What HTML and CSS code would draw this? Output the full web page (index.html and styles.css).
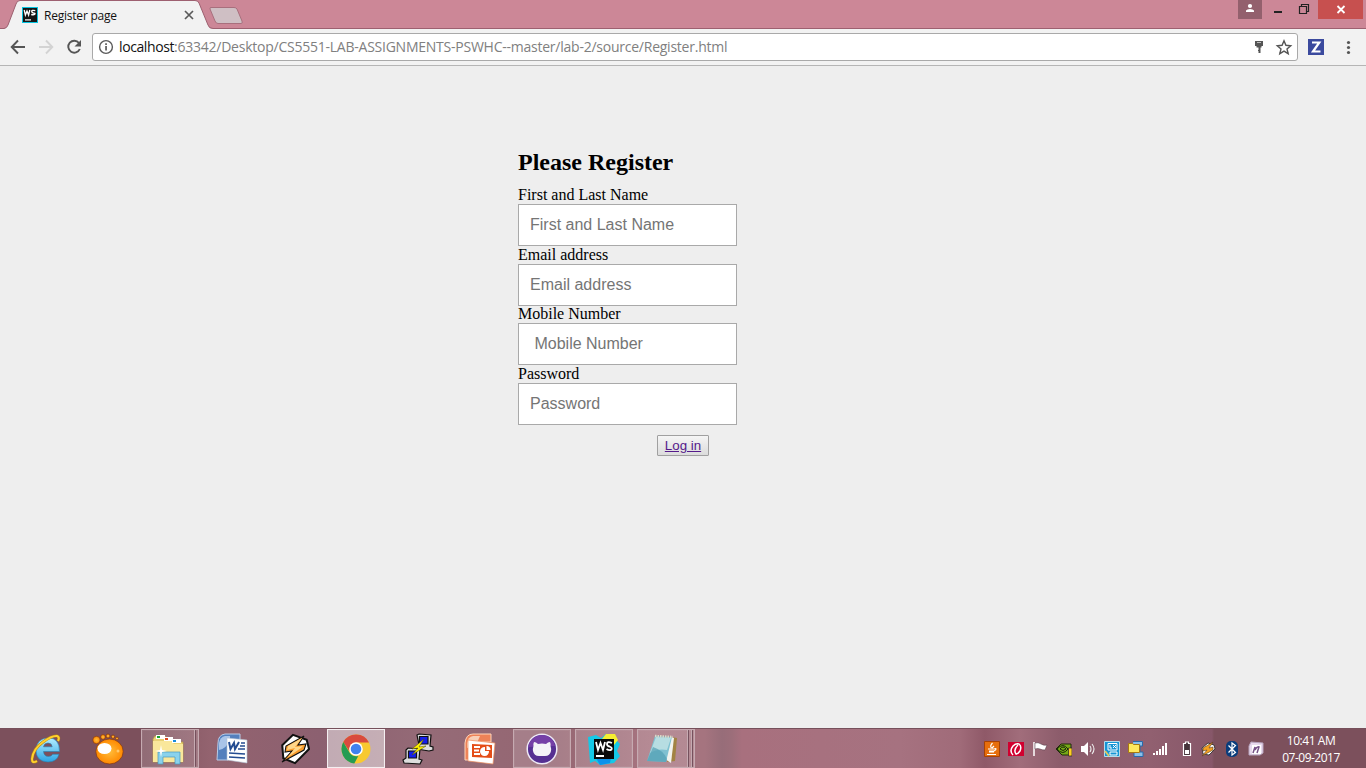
FILE: index.html
```html
<!DOCTYPE html>
<html lang="en">
<head>
<meta charset="utf-8">
<title>Register page</title>
<link rel="stylesheet" href="styles.css">
</head>
<body>
<div class="screen">
  <header class="tabstrip">
    <svg class="tab-shapes" width="250" height="29" viewBox="0 0 250 29">
      <path d="M0 28.500H5Q7 28 8 25L16 4Q17 .5 20 .5H195Q198 .5 199 3L208 25Q209 28.500 212 28.500H250V29H0Z" fill="#f2f2f2"/>
      <path d="M0 28.500H4Q7 28 8 25L16 4Q17 .5 20 .5H195Q198 .5 199 3L208 25Q209 28.500 213 28.500H250" fill="none" stroke="#9d6070"/>
      <path d="M211 7.500H234Q236 7.500 237 9L242 21Q243 23.500 241 23.500H218Q216 23.500 215 21L210 9Q209.500 7.500 211 7.500Z" fill="#cfbfc4" stroke="#a86f7d"/>
    </svg>
    <div class="tab">
      <svg width="16" height="16" viewBox="0 0 16 16"><path fill="#07c3df" d="M0 0h16v16H0z"/><path fill="#151515" d="M1 1h14v14H1z"/><path d="M2.200 3l1.200 5L5 4l1.600 4L7.800 3M13.300 3.600Q9.500 2.800 9.700 4.300T13 6.500Q13 8.300 9.200 7.500" fill="none" stroke="#fff" stroke-width="1.300"/><path fill="#fff" d="M3 12.300h6v1.200H3z"/></svg>
      <span class="tab-title">Register page</span>
      <svg class="tab-close" width="10" height="10" viewBox="0 0 10 10"><path d="M1 1l8 8M9 1L1 9" stroke="#5a5a5a" stroke-width="1.700"/></svg>
    </div>
    <div class="winbtns">
      <span class="user"><svg width="24" height="19" viewBox="0 0 24 19"><circle cx="12" cy="6" r="2.100" fill="#fff"/><path d="M8 12V10.500Q9 9 12 9t4 1.500V12z" fill="#fff"/></svg></span>
      <svg width="56" height="19" viewBox="0 0 56 19"><path d="M12 11h8v2h-8z" fill="#222"/><path d="M37.500 6.500h7v7h-7zM39.500 6V4.500h7v7H45" fill="none" stroke="#222" stroke-width="1.200"/></svg>
      <span class="winclose"><svg width="45" height="19" viewBox="0 0 45 19"><path d="M19.500 6l7 7m0-7l-7 7" stroke="#fff" stroke-width="1.800"/></svg></span>
    </div>
  </header>

  <nav class="toolbar">
    <svg width="92" height="36" viewBox="0 0 92 36" fill="none" stroke-width="1.900">
      <path d="M25 18H12M18 11.500L11.700 18l6.300 6.500" stroke="#555"/>
      <path d="M39 18h13M46 11.500l6.300 6.500-6.300 6.500" stroke="#d3d3d3"/>
      <path d="M79 14a6 6 0 1 0 .8 6" stroke="#555"/><path d="M81 11v6.500h-6.500z" fill="#555"/>
    </svg>
    <div class="omnibox">
      <svg class="info" width="16" height="16" viewBox="0 0 16 16"><circle cx="8" cy="8" r="6.400" fill="none" stroke="#5a5a5a" stroke-width="1.400"/><path d="M7.200 7h1.700v4.500H7.200zM7.200 4.300h1.700v1.600H7.200z" fill="#5a5a5a"/></svg>
      <span class="url"><b>localhost</b>:63342/Desktop/CS5551-LAB-ASSIGNMENTS-PSWHC--master/lab-2/source/Register.html</span>
      <svg class="omni-icons" width="42" height="26" viewBox="0 0 42 26"><path d="M3 7h8v5H9.500v1.500H8.500V19h-2v-5.500H4.500V12H3z" fill="#555"/><path d="M5 8.500h4" stroke="#bbb"/><path d="M6 16.500h2" stroke="#555"/><path d="M32 6.800l1.900 4.500 4.800.4-3.700 3.200 1.200 4.800-4.200-2.600-4.200 2.600 1.200-4.800-3.700-3.200 4.800-.4z" fill="none" stroke="#555" stroke-width="1.400"/></svg>
    </div>
    <svg width="68" height="36" viewBox="0 0 68 36"><path d="M10 10h16v16H10z" fill="#3b4a9e"/><path d="M14 13.500h7.300L15 22.500h7.500" fill="none" stroke="#fff" stroke-width="2.200"/><g fill="#555"><circle cx="50.500" cy="13.500" r="1.600"/><circle cx="50.500" cy="18.500" r="1.600"/><circle cx="50.500" cy="23.500" r="1.600"/></g></svg>
  </nav>

  <main class="page">
    <form class="form">
      <h2>Please Register</h2>
      <label for="name">First and Last Name</label>
      <input id="name" type="text" placeholder="First and Last Name">
      <label for="email">Email address</label>
      <input id="email" type="email" placeholder="Email address">
      <label for="mobile">Mobile Number</label>
      <input id="mobile" type="text" placeholder=" Mobile Number">
      <label for="password">Password</label>
      <input id="password" type="password" placeholder="Password">
      <button class="login" type="button"><span>Log in</span></button>
    </form>
  </main>

  <footer class="taskbar">
    <div class="apps">
      <div class="app"><svg width="32" height="32" viewBox="0 0 32 32"><defs><linearGradient id="ie" x2="0" y2="1"><stop stop-color="#b4efff"/><stop offset="1" stop-color="#2ca4e4"/></linearGradient></defs><path d="M29.500 18.500H13.500q.5 5 5 5 3 0 4.200-2.200h6.300Q27 29 18 29 6 28.500 6 17 6.500 5.500 18 5t11.500 13.500zM13.500 13.800h8.700Q22 10 18 10t-4.500 3.800z" fill="url(#ie)" stroke="#2583b4" stroke-width=".6"/><path d="M7 28Q2 31 2 26 3 16 13 9q9-6.500 14-6 3 1 1 5" fill="none" stroke="#b8860f" stroke-width="2.800"/><path d="M7 28Q2 31 2 26 3 16 13 9q9-6.500 14-6 3 1 1 5" fill="none" stroke="#ffd02e" stroke-width="2"/></svg></div>
      <div class="app"><svg width="32" height="32" viewBox="0 0 32 32"><defs><radialGradient id="gom"><stop stop-color="#ffbd3b"/><stop offset="1" stop-color="#ff8900"/></radialGradient></defs><g fill="url(#gom)" stroke="#7c3517" stroke-width=".7"><ellipse cx="17.500" cy="18.500" rx="13.700" ry="12.500"/><circle cx="4.500" cy="7" r="3.700"/><circle cx="11" cy="4" r="2.400"/><circle cx="16" cy="3" r="2"/><circle cx="21" cy="3.700" r="1.700"/><circle cx="25" cy="5.500" r="1.400"/></g><ellipse cx="12.500" cy="15.500" rx="7" ry="5.500" fill="#fff"/><circle cx="26" cy="18" r="1.500" fill="#ffc96b"/></svg></div>
      <div class="app open stack"><svg width="34" height="32" viewBox="0 0 34 32"><path d="M2 6l2-3h10l2 3h6l2 3h8v20H2z" fill="#e8d176" stroke="#b59a43" stroke-width=".7"/><path d="M5 2h9v4H5z" fill="#fff"/><path d="M6 3h3v2H6z" fill="#1ba32f"/><path d="M13 4h9v4h-9z" fill="#fff"/><path d="M14 5h3v2h-3z" fill="#dc491f"/><path d="M2 8h18l3 3h9v18H2z" fill="#f9e79b"/><path d="M21 6h9v4h-9z" fill="#fff"/><path d="M22 7h3v2h-3z" fill="#178bdc"/><path d="M7 31V19h22v12h-5v-7H12v7z" fill="#8ad2ec" stroke="#4599bf" stroke-width=".7"/><path d="M10 12l1 5 5 1-5 1-1 5-1-5-5-1 5-1z" fill="#fff"/></svg></div>
      <div class="app"><svg width="32" height="32" viewBox="0 0 32 32"><path d="M2 10Q2 2 9 1h15v6H12v20H1z" fill="#5480bd" stroke="#b8cce8"/><path d="M3 17Q10 16 14 7V3H9Q4 4 3 10z" fill="#a9c4e8"/><path d="M11 5l20 2v23l-20-3z" fill="#fff" stroke="#b4c2d5" stroke-width=".6"/><path d="M13 9l1.500 7 3.500-6 1 6 4-7" fill="none" stroke="#244c91" stroke-width="2"/><path d="M25 10h4M24 13h5M22 16h7M13 20l16 1M13 24l16 1" fill="none" stroke="#244c91" stroke-width="1.700"/></svg></div>
      <div class="app"><svg width="32" height="32" viewBox="0 0 32 32"><path d="M4 13L14 2l14 4 3 9-13 15-12-4z" fill="#fff" stroke="#111" stroke-width="2" transform="rotate(4 16 16)"/><path d="M26 3L8 13l-1 6 7-1L4 29l22-12 2-6-8 1z" fill="#fa9c2c" stroke="#111" stroke-width="1.100"/><path d="M24 5L10 13l-1 4 8-2-7 9 13-9 2-2-8 1z" fill="#ffd68a"/></svg></div>
      <div class="app open active"><svg width="32" height="32" viewBox="0 0 32 32"><circle cx="16" cy="16" r="14.500" fill="#f8c930"/><path d="M3.300 9A14.500 14.500 0 0 1 29 9.500H16a7 7 0 0 0-6.500 9z" fill="#d94b3e"/><path d="M3.300 9l6.500 11q3 4 8.500 3l-4 7.500A14.500 14.500 0 0 1 3.300 9z" fill="#249c52"/><circle cx="16" cy="16" r="6.800" fill="#fff"/><circle cx="16" cy="16" r="5.300" fill="#3f82ef"/></svg></div>
      <div class="app"><svg width="32" height="32" viewBox="0 0 32 32"><g stroke="#111" stroke-width="1.200"><path d="M15 2l2-1 12 1-1 11 3 1v3l-4 1-12-2v-3l2-1z" fill="#dedede"/><path d="M17.500 3.500h8.500V11h-8.500z" fill="#141eec"/><path d="M4 17l2-2 12 1-1 10 3 1-2 4-16-1-1-3 3-2z" fill="#dedede"/><path d="M6.500 18h8v7h-8z" fill="#141eec"/></g><path d="M22 6L10 16l6-1-6 7 14-9-7 1z" fill="#fff000" stroke="#454500" stroke-width=".5"/></svg></div>
      <div class="app"><svg width="32" height="32" viewBox="0 0 32 32"><path d="M1 10Q2 1 9 1h18v8H11v18H1z" fill="#ee8258" stroke="#ffd5b9"/><path d="M3 15Q13 13 16 3H9Q4 4 3 10z" fill="#f9d0b8"/><path d="M4 7l27 3-2 21-25-3z" fill="#fff" stroke="#ef8c5b" stroke-width=".7"/><path d="M8 11l20 1v13L8 24z" fill="#e44d18"/><path d="M10 14h6M10 17.500h5M10 21h6" stroke="#fff" stroke-width="2"/><path d="M21 14v4h4a4.500 4.500 0 1 1-4-4z" fill="#fff"/><path d="M22.500 13v4h4q0-4-4-4" fill="#fff"/></svg></div>
      <div class="app open"><svg width="32" height="32" viewBox="0 0 32 32"><circle cx="16" cy="16" r="14.800" fill="#563092" stroke="#eee9f5" stroke-width="1.500"/><path d="M2 14Q5 2 17 2q10 1 12 11z" fill="#7540a7"/><path d="M8 9q2 0 4 2 4-1 8 0 2-2 4-2 1 2 .5 4 1 3 .5 5-1 5-6 5h-6q-5 0-6-5-.5-2 .5-5Q7 11 8 9z" fill="#f4f3f7"/></svg></div>
      <div class="app open"><svg width="32" height="32" viewBox="0 0 32 32"><path d="M0 4l8-2 5 3 5-4 9 1 2 6 3 3-3 7 3 5-6 7-14 2-5-4-5 2z" fill="#15c8e6"/><path d="M14 6l4-5h9l3 6-4 5z" fill="#f5ed31"/><path d="M8 25h15l-1 5-10 2z" fill="#0c91eb"/><path d="M6 6h20v20H6z" fill="#090909"/><path d="M8 9l2 8 2.500-7 2.500 7 2-8M24 10q-5-2-5 1 0 2 2.500 2.500 3 1 2 3-2 1.500-5-.5M8 23h8" stroke="#fff" stroke-width="1.800" fill="none"/></svg></div>
      <div class="app open stack triple"><svg width="34" height="32" viewBox="0 0 34 32"><path d="M26 4l6 1-2 23-8 1z" fill="#a28343"/><path d="M26 4l3 1-3 25-6-4z" fill="#f2f3ee"/><path d="M10 3l17 1-6 25-19-1z" fill="#7fc1d1"/><path d="M11 4l15 1-4 12q-9-2-17 3z" fill="#b7dde2"/><path d="M2 28l6-14q10 3 14 12l-1 3z" fill="#519eb4" opacity=".7"/><path d="M10 3l18 1" stroke="#d9d9c8" stroke-width="2.500" stroke-dasharray="1.500 1"/></svg></div>
    </div>
    <div class="tray">
      <svg width="16" height="16" viewBox="0 0 16 16"><path fill="#e76e0c" stroke="#a74205" d="M.5.500h15v15H.5z"/><path d="M8.500 2q-3 3-1 5M10 5L8 7M4 8h6q2-1 2 0t-2 2H5M5 11h5M3 13.500h9" fill="none" stroke="#fff" stroke-width="1.200"/></svg>
      <svg width="16" height="16" viewBox="0 0 16 16"><path fill="#d1002f" d="M0 1h16v14H0z"/><path d="M5 14Q1 10 5 5q3-3 6-2 3 2 1 7-2 3-4 3Q5 9 10 4" fill="none" stroke="#fff" stroke-width="1.500"/></svg>
      <svg width="16" height="16" viewBox="0 0 16 16"><path d="M2 1v14" stroke="#fff" stroke-width="1.500"/><path d="M3 2q3-1 6 1 3 2 6 1l-2 5q-3 0-5-1-2-1-5 0z" fill="#fff" stroke="#4b3540" stroke-width=".5"/></svg>
      <svg width="16" height="16" viewBox="0 0 16 16"><path d="M0 8l5-5h10v11H6z" fill="#76a916" stroke="#202b0c"/><path d="M1 8q6-7 11 0-5 7-11 0M4 8q3-4 6 0-3 3-6 0" fill="none" stroke="#18240b"/><path d="M12.500 7H16v8h-3.500z" fill="#ffcf20" stroke="#222" stroke-width=".7"/></svg>
      <svg width="16" height="16" viewBox="0 0 16 16"><path d="M1 5h3l4-4v14l-4-4H1z" fill="#fff"/><path d="M10 5q2 3 0 6M12 3q4 5 0 10" fill="none" stroke="#eee" stroke-width="1.100"/></svg>
      <svg width="16" height="16" viewBox="0 0 16 16"><path d="M.5.500h15v15H.5z" fill="#1595d5" stroke="#b3dcec"/><path d="M4 2.500h9V9H4zM6 11h7v3H6zM6 4v3h2M9 4l3 3m0-3L9 7" fill="none" stroke="#fff"/><path d="M1 10l4 5" stroke="#ddc861" stroke-width="2"/></svg>
      <svg width="16" height="16" viewBox="0 0 16 16"><path d="M5 .500h9.500V5H12v6h3v4.500H6V12" fill="#8abfe8" stroke="#286aab"/><path d="M.5 2.500h4l1 1h6v8H.5z" fill="#ffe85d" stroke="#a77a10"/></svg>
      <svg width="16" height="16" viewBox="0 0 16 16"><path fill="#fff" d="M1 12h2v2H1zm3-2h2v4H4zm3-2h2v6H7zm3-3h2v9h-2zm3-3h2v12h-2z"/></svg>
      <svg class="battery" width="16" height="16" viewBox="0 0 16 16"><path d="M6.500 2.500V1h3v1.500h2v12h-7v-12z" fill="#45343b" stroke="#fff" stroke-width="1.200"/><path fill="#fff" d="M6 9h4v4H6z"/></svg>
      <svg width="16" height="16" viewBox="0 0 16 16"><path d="M2 7l6-5 6 2 1 4-6 6-6-1z" fill="#fff" stroke="#222" stroke-width=".8"/><path d="M13 1L3 7v3l4-1-5 6 11-6V6L9 7z" fill="#f3a121" stroke="#543d25" stroke-width=".6"/></svg>
      <svg width="16" height="16" viewBox="0 0 16 16"><rect x="2" width="12" height="16" rx="5" fill="#093d7c"/><path d="M4.500 4.500l7 7L8 14V2l3.500 2.500-7 7" fill="none" stroke="#fff" stroke-width="1.200"/></svg>
      <svg width="16" height="16" viewBox="0 0 16 16"><path d="M3 1l12 1v10l-3 2H1V5z" fill="#e8d9ee" stroke="#b7a4bd"/><path d="M4 4h9v9H4z" fill="#fff"/><path d="M5 12l2-6v3q2-4 4-3l-2 6" fill="none" stroke="#765187" stroke-width="1.500"/></svg>
    </div>
    <div class="clock"><span class="time">10:41 AM</span><span class="date">07-09-2017</span></div>
  </footer>
</div>
</body>
</html>
```
FILE: styles.css
```css
* { box-sizing: border-box; }
body { margin: 0; overflow: hidden; font-family: "Open Sans", "Noto Sans", sans-serif; }
svg { display: block; flex: none; }
.screen { width: 1366px; height: 768px; display: flex; flex-direction: column; background: #eee; }

.tabstrip { position: relative; height: 29px; flex: none; display: flex; justify-content: space-between; background: #cc8797; border-bottom: 1px solid #9d6070; }
.tab-shapes { position: absolute; left: 0; top: 0; }
.tab { position: relative; display: flex; align-items: center; width: 194px; height: 29px; padding: 1px 0 0 22px; }
.tab-title { margin-left: 6px; font-size: 12px; letter-spacing: -.22px; color: #111; white-space: nowrap; }
.tab-close { margin-left: auto; }
.winbtns { display: flex; height: 19px; margin-right: 3px; }
.user { width: 24px; background: #93606d; }
.winclose { width: 45px; background: #c7504f; }

.toolbar { height: 37px; flex: none; display: flex; background: #f2f2f2; border-bottom: 1px solid #b5b5b5; }
.omnibox { width: 1206px; height: 28px; margin-top: 4px; display: flex; align-items: center; background: #fff; border: 1px solid #a9a9a9; border-radius: 3px; }
.info { margin-left: 5px; }
.url { margin-left: 5px; margin-top: -1px; font-size: 14px; letter-spacing: -.24px; color: #808080; white-space: nowrap; }
.url b { font-weight: 400; letter-spacing: -.4px; color: #111; }
.omni-icons { margin-left: auto; margin-right: 3px; }

.page { flex: 1; min-height: 0; padding: 82px 0 0 518px; background: #eee; }
.form { width: 219px; display: flex; flex-direction: column; font-family: "Liberation Serif", serif; color: #000; }
.form h2 { margin: 0 0 10.300px; font-size: 24px; line-height: 28px; }
.form label { margin-top: -.2px; height: 17.870px; font-size: 16px; line-height: 18px; white-space: nowrap; }
.form input { width: 219px; height: 42px; margin: 0; padding: 10px 10px 10px 11px; border: 1px solid #a9a9a9; border-radius: 0; background: #fff; font: 16px "Liberation Sans", sans-serif; }
.form input::placeholder { color: #757575; opacity: 1; }
.login { width: 52px; height: 21px; margin: 10px 28px 0 auto; padding: 0; border: 1px solid #a0a0a0; border-radius: 1px; background: linear-gradient(#f5f5f5, #dcdcdc); font: 13.330px "Liberation Sans", sans-serif; color: #551a8b; }
.login span { text-decoration: underline; }

.taskbar { height: 40px; flex: none; display: flex; border-top: 1px solid #76505b; background: linear-gradient(90deg, #7c505c 0, #7c505c 140px, #93636f 210px, #8c6070 320px, #956b77 430px, #956672 550px, #a77480 650px, #a5747f 705px, #976d79 722px, #9c6e7a 732px, #a8707e 742px, #a67280 900px, #a06b79 960px, #8f5968 985px, #a16d7b 1020px, #8c5c6b 1060px, #916070 1150px, #875769 1212px, #7c505c 1214px, #7c505c 100%); }
.apps { width: 980px; flex: none; display: flex; gap: 4px; padding-left: 17px; }
.app { width: 58px; height: 39px; flex: none; display: flex; align-items: center; justify-content: center; border: 1px solid transparent; }
.open { border-color: #c6aab1; background: #ffffff28; box-shadow: inset 0 0 0 1px #ffffff0c; }
.active { border-color: #f5eff1; background: #ffffff78; }
.stack { padding-right: 5px; background: linear-gradient(90deg, #ffffff28 52px, #c6aab1 52px 53px, #76515d 53px 54px, #ffffff28 54px); }
.triple { padding-right: 8px; background: linear-gradient(90deg, #ffffff28 49px, #c6aab1 49px 50px, #76515d 50px 51px, #ffffff28 51px 53px, #c6aab1 53px 54px, #76515d 54px 55px, #ffffff28 55px); }
.tray { width: 288px; flex: none; display: flex; align-items: center; gap: 8px; padding: 1px 4px 0; }
.battery { margin: 0 -3px 0 3px; }
.clock { width: 86px; display: flex; flex-direction: column; align-items: center; padding-top: 3px; font-size: 12px; line-height: 17px; color: #fff; white-space: nowrap; }
.time { letter-spacing: -.45px; }
.date { letter-spacing: -.5px; }
```
